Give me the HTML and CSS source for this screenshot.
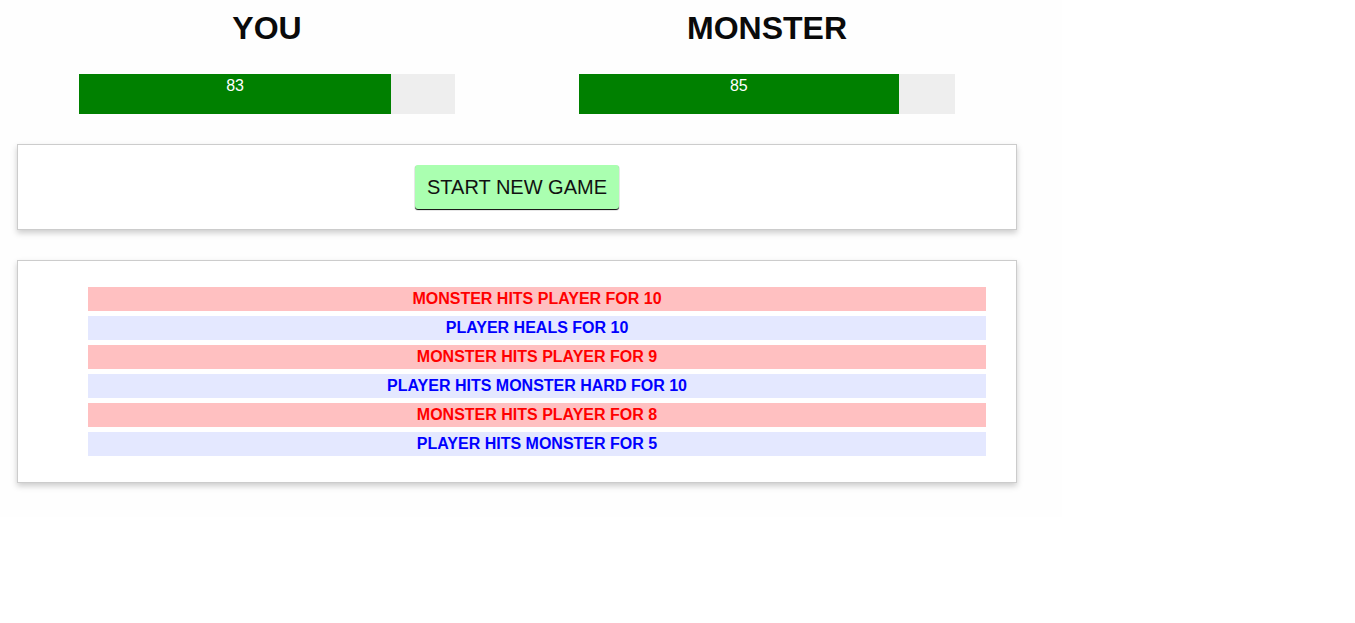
FILE: index.html
```html
<!DOCTYPE html>
<html lang="en">
<head>
<meta charset="utf-8">
<title>Monster Slayer</title>
<link rel="stylesheet" href="styles.css">
</head>
<body>
<div class="app">
  <div class="container">
    <section class="row">
      <div class="column">
        <h1 class="title">YOU</h1>
        <div class="healthbar">
          <div class="health" style="width: 83%;">83</div>
        </div>
      </div>
      <div class="column">
        <h1 class="title">MONSTER</h1>
        <div class="healthbar">
          <div class="health" style="width: 85%;">85</div>
        </div>
      </div>
    </section>
    <section class="controls">
      <button class="start-game">START NEW GAME</button>
    </section>
    <section class="log">
      <ul class="log-list">
        <li class="monster-turn">Monster hits Player for 10</li>
        <li class="player-turn">Player heals for 10</li>
        <li class="monster-turn">Monster hits Player for 9</li>
        <li class="player-turn">Player hits Monster hard for 10</li>
        <li class="monster-turn">Monster hits Player for 8</li>
        <li class="player-turn">Player hits Monster for 5</li>
      </ul>
    </section>
  </div>
</div>
</body>
</html>
```
FILE: styles.css
```css
html, body {
  margin: 0;
  padding: 0;
  background: #ffffff;
}

body {
  font-family: "Liberation Sans", Arial, sans-serif;
  font-size: 16px;
  line-height: 1.5;
  color: #0a0a0a;
}

.app {
  width: 1062px;
  box-sizing: border-box;
  padding: 10px 45px 34px 17px;
  background: #fefefe;
}

.container {
  width: 1000px;
}

.row {
  display: flex;
}

.column {
  width: 500px;
  box-sizing: border-box;
  padding: 0 15px;
}

.title {
  margin: 0;
  text-align: center;
  font-size: 32px;
  line-height: 37px;
  font-weight: bold;
  color: #0a0a0a;
}

.healthbar {
  width: 80%;
  height: 40px;
  margin: 27px auto 0;
  background-color: #eeeeee;
}

.health {
  height: 100%;
  background-color: #008000;
  color: #ffffff;
  text-align: center;
  line-height: 24px;
}

.controls,
.log {
  margin-top: 30px;
  padding: 10px;
  text-align: center;
  background: #ffffff;
  border: 1px solid #cccccc;
  box-shadow: 0 3px 6px #cccccc;
}

.start-game {
  margin: 10px;
  padding: 12px;
  border: none;
  border-radius: 3px;
  font-family: "Liberation Sans", Arial, sans-serif;
  font-size: 20px;
  line-height: 20px;
  color: #111111;
  background-color: #aaffb0;
  box-shadow: 0 1px 1px #000000;
  cursor: pointer;
}

.log-list {
  list-style: none;
  margin: 16px 0;
  padding: 0 0 0 40px;
  font-weight: bold;
  text-transform: uppercase;
}

.log-list li {
  margin: 5px 20px;
  line-height: 24px;
}

.player-turn {
  color: #0000ff;
  background-color: #e4e8ff;
}

.monster-turn {
  color: #ff0000;
  background-color: #ffc0c1;
}
```
